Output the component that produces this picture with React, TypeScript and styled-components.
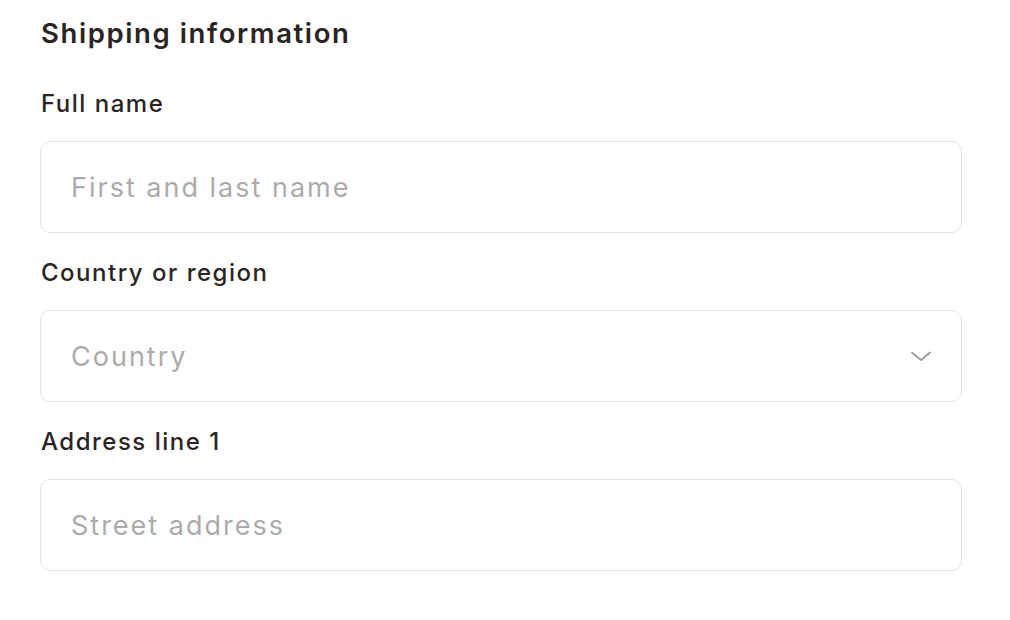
import React from "react";
import styled, { createGlobalStyle } from "styled-components";

const Global = createGlobalStyle`
  html, body { margin: 0; padding: 0; background: #ffffff; }
  body { font-family: Inter, "Noto Sans", sans-serif; -webkit-font-smoothing: antialiased; }
`;

const Form = styled.form`
  width: 922px;
  padding: 16px 0 0 40px;
  display: flex;
  flex-direction: column;
`;

const Title = styled.h2`
  margin: 0 0 40px 1px;
  font-size: 27.5px;
  line-height: 34px;
  font-weight: 600;
  color: #2a2523;
  letter-spacing: 1.6px;
`;

const Field = styled.div`
  display: flex;
  flex-direction: column;
  gap: 23px;
  margin-bottom: 26px;
`;

const Label = styled.label`
  font-size: 24px;
  line-height: 28px;
  font-weight: 500;
  color: #2a2523;
  margin-left: 1px;
  letter-spacing: 1.5px;
`;

const Box = styled.div`
  position: relative;
  height: 92px;
  box-sizing: border-box;
  border: 1.5px solid #e3e3e3;
  border-radius: 10px;
  display: flex;
  align-items: center;
  padding: 0 28px 0 30px;
`;

const Input = styled.input`
  border: none;
  outline: none;
  background: transparent;
  width: 100%;
  font-family: inherit;
  font-size: 27px;
  letter-spacing: 2px;
  color: #2a2523;
  padding: 0;
  &::placeholder { color: #ababab; }
`;

const Chevron = styled.svg`
  flex: none;
  width: 22px;
  height: 11px;
  margin-right: 1px;
`;

export default function App() {
  return (
    <>
      <Global />
      <Form onSubmit={(e) => e.preventDefault()}>
        <Title>Shipping information</Title>
        <Field>
          <Label>Full name</Label>
          <Box>
            <Input placeholder="First and last name" />
          </Box>
        </Field>
        <Field>
          <Label>Country or region</Label>
          <Box>
            <Input placeholder="Country" readOnly />
            <Chevron viewBox="0 0 22 11" fill="none">
              <path d="M2 1.5 L11 9 L20 1.5" stroke="#9a9a9a" strokeWidth="1.8" strokeLinecap="round" strokeLinejoin="round" />
            </Chevron>
          </Box>
        </Field>
        <Field>
          <Label>Address line 1</Label>
          <Box>
            <Input placeholder="Street address" />
          </Box>
        </Field>
      </Form>
    </>
  );
}
